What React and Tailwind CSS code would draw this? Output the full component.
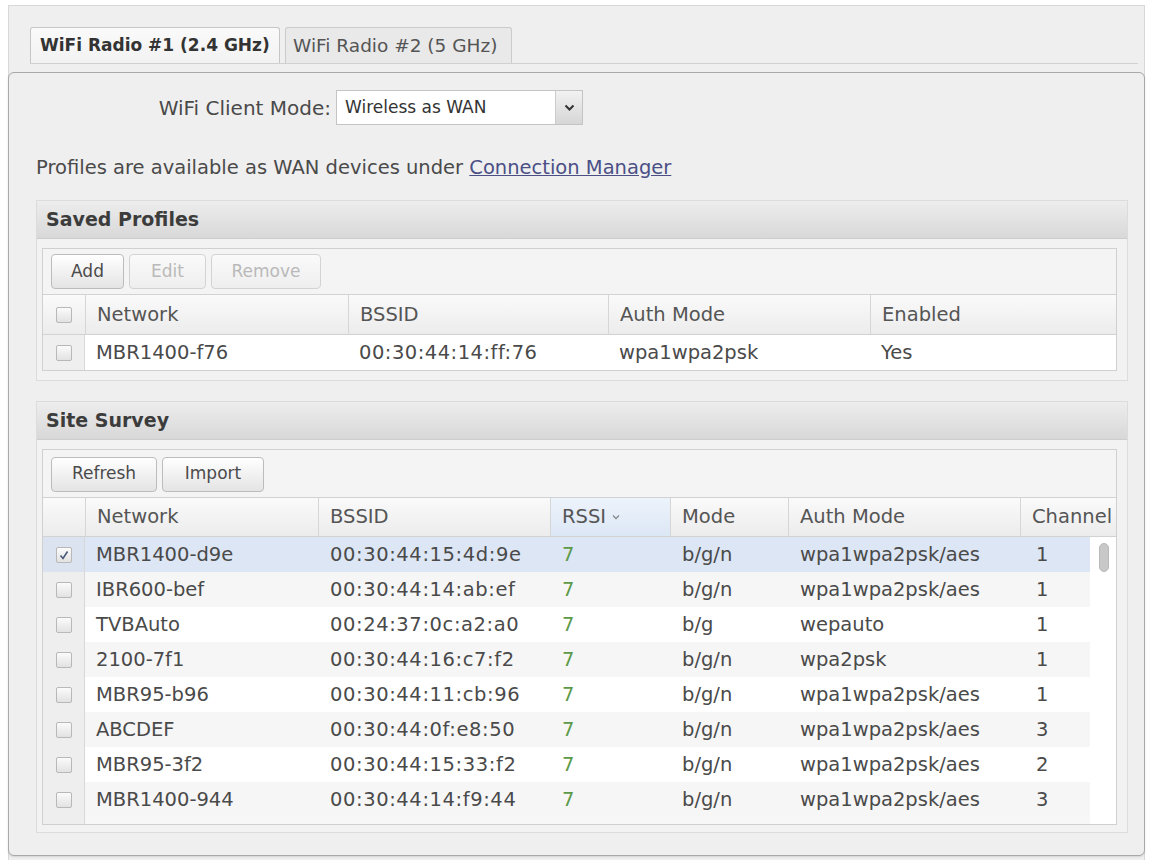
import React from "react";

const profiles = [["MBR1400-f76", "00:30:44:14:ff:76", "wpa1wpa2psk", "Yes"]];

const survey = [
  ["MBR1400-d9e", "00:30:44:15:4d:9e", "7", "b/g/n", "wpa1wpa2psk/aes", "1", true],
  ["IBR600-bef", "00:30:44:14:ab:ef", "7", "b/g/n", "wpa1wpa2psk/aes", "1"],
  ["TVBAuto", "00:24:37:0c:a2:a0", "7", "b/g", "wepauto", "1"],
  ["2100-7f1", "00:30:44:16:c7:f2", "7", "b/g/n", "wpa2psk", "1"],
  ["MBR95-b96", "00:30:44:11:cb:96", "7", "b/g/n", "wpa1wpa2psk/aes", "1"],
  ["ABCDEF", "00:30:44:0f:e8:50", "7", "b/g/n", "wpa1wpa2psk/aes", "3"],
  ["MBR95-3f2", "00:30:44:15:33:f2", "7", "b/g/n", "wpa1wpa2psk/aes", "2"],
  ["MBR1400-944", "00:30:44:14:f9:44", "7", "b/g/n", "wpa1wpa2psk/aes", "3"],
];

function Checkbox({ checked }) {
  return (
    <span className="w-[16px] h-[16px] border border-[#b8b8b8] rounded-[2px] bg-linear-to-b from-[#fbfbfb] to-[#e2e2e2] flex items-center justify-center">
      {checked && (
        <svg width="12" height="12" viewBox="0 0 12 12">
          <path d="M2.5 6.5 L5 9.5 L9.5 2.5" fill="none" stroke="#4a5a78" strokeWidth="1.6" />
        </svg>
      )}
    </span>
  );
}

function Button({ children, width, disabled }) {
  return (
    <div
      className={
        "h-[35px] rounded-[4px] border flex items-center justify-center text-[17px] bg-linear-to-b " +
        width +
        (disabled
          ? " border-[#d3d3d3] from-[#fafafa] to-[#eeeeee] text-[#b9b9b9]"
          : " border-[#bcbcbc] from-white to-[#e4e4e4] text-[#4a4a4a]")
      }
    >
      {children}
    </div>
  );
}

function SectionHeader({ title }) {
  return (
    <div className="h-[38px] bg-linear-to-b from-[#ededed] to-[#d8d8d8] border-b border-[#cdcdcd] flex items-center pl-[9px] font-bold text-[19px] text-[#3c3c3c]">
      {title}
    </div>
  );
}

function HeadCell({ children, className = "" }) {
  return (
    <div className={"flex items-center pl-[11px] border-l border-[#d6d6d6] whitespace-nowrap overflow-hidden " + className}>
      {children}
    </div>
  );
}

export default function App() {
  return (
    <div className="w-[1154px] h-[860px] bg-white pt-[5px] pl-[8px] pr-[9px] font-['DejaVu_Sans',sans-serif] text-[#4a4a4a]">
      <div className="h-[855px] bg-[#efefef] border-t border-r border-l border-[#d8d8d8] flex flex-col">
        {/* radio tabs */}
        <div className="pt-[22px] pl-[21px] pr-[6px]">
          <div className="flex items-end gap-[5px] h-[36px] border-b border-[#d0d0d0]">
            <div className="h-[36px] w-[250px] px-[9px] border border-b-0 border-[#c6c6c6] rounded-t-[3px] bg-linear-to-b from-[#fafafa] to-[#f2f2f2] flex items-center font-bold text-[17px] text-[#333] whitespace-nowrap">
              WiFi Radio #1 (2.4 GHz)
            </div>
            <div className="h-[36px] w-[227px] px-[7px] border border-b-0 border-[#cbcbcb] rounded-t-[3px] bg-[#e9e9e9] flex items-center text-[18.5px] text-[#555] whitespace-nowrap">
              WiFi Radio #2 (5 GHz)
            </div>
          </div>
        </div>

        {/* main panel */}
        <div className="mt-[8px] mb-[4px] -ml-px -mr-px flex-1 border border-[#a9a9a9] rounded-[6px] bg-[#efefef] flex flex-col pl-[27px] shadow-[0_1px_2px_rgba(0,0,0,0.12)]">
          <div className="mt-[17px] flex items-center h-[35px]">
            <div className="w-[300px] text-right pr-[5px] text-[20px] whitespace-nowrap">WiFi Client Mode:</div>
            <div className="w-[247px] h-[35px] border border-[#c4c4c4] bg-white flex">
              <div className="flex-1 flex items-center pl-[8px] text-[17px] text-[#333]">Wireless as WAN</div>
              <div className="w-[27px] border-l border-[#cccccc] bg-linear-to-b from-[#f2f2f2] to-[#d6d6d6] flex items-center justify-center">
                <svg width="11" height="8" viewBox="0 0 11 8">
                  <path d="M1.5 1.5 L5.5 5.5 L9.5 1.5" fill="none" stroke="#333" strokeWidth="2" />
                </svg>
              </div>
            </div>
          </div>

          <div className="mt-[31px] h-[24px] flex items-center text-[19.5px] whitespace-nowrap">
            Profiles are available as WAN devices under&nbsp;
            <span className="underline text-[#4b4f86] decoration-[#4b4f86]">Connection Manager</span>
          </div>

          {/* saved profiles */}
          <div className="mt-[20px] w-[1092px] border border-[#dcdcdc] bg-[#f2f2f2] pb-[9px]">
            <SectionHeader title="Saved Profiles" />
            <div className="mt-[9px] ml-[5px] w-[1075px] border border-[#d0d0d0] bg-[#f4f4f4]">
              <div className="h-[45px] flex items-center gap-[5px] pl-[8px]">
                <Button width="w-[73px]">Add</Button>
                <Button width="w-[77px]" disabled>Edit</Button>
                <Button width="w-[110px]" disabled>Remove</Button>
              </div>
              <div className="grid grid-cols-[42px_263px_260px_262px_1fr] h-[41px] border-t border-b border-[#d2d2d2] bg-linear-to-b from-[#fafafa] to-[#ececec] text-[19.5px] text-[#555]">
                <div className="flex items-center justify-center"><Checkbox /></div>
                <HeadCell>Network</HeadCell>
                <HeadCell>BSSID</HeadCell>
                <HeadCell>Auth Mode</HeadCell>
                <HeadCell>Enabled</HeadCell>
              </div>
              {profiles.map((p) => (
                <div key={p[0]} className="grid grid-cols-[42px_263px_260px_262px_1fr] h-[35px] text-[19.5px]">
                  <div className="flex items-center justify-center bg-[#efefef] border-r border-[#d8d8d8]"><Checkbox /></div>
                  <div className="flex items-center pl-[11px] bg-white">{p[0]}</div>
                  <div className="flex items-center pl-[11px] bg-white tracking-[0.5px]">{p[1]}</div>
                  <div className="flex items-center pl-[11px] bg-white">{p[2]}</div>
                  <div className="flex items-center pl-[11px] bg-white">{p[3]}</div>
                </div>
              ))}
            </div>
          </div>

          {/* site survey */}
          <div className="mt-[20px] w-[1092px] border border-[#dcdcdc] bg-[#f2f2f2] pb-[7px]">
            <SectionHeader title="Site Survey" />
            <div className="mt-[9px] ml-[5px] w-[1075px] border border-[#d0d0d0] bg-[#f4f4f4] overflow-hidden">
              <div className="h-[47px] flex items-center gap-[5px] pl-[8px] pt-[1px]">
                <Button width="w-[106px]">Refresh</Button>
                <Button width="w-[102px]">Import</Button>
              </div>
              <div className="grid grid-cols-[42px_233px_232px_120px_118px_232px_1fr] h-[40px] border-t border-b border-[#d2d2d2] bg-linear-to-b from-[#fafafa] to-[#ececec] text-[19.5px] text-[#555]">
                <div />
                <HeadCell>Network</HeadCell>
                <HeadCell>BSSID</HeadCell>
                <HeadCell className="bg-linear-to-b from-[#edf3fb] to-[#dce7f5]">
                  RSSI
                  <svg className="ml-[6px]" width="8" height="6" viewBox="0 0 8 6">
                    <path d="M1 1.5 L4 4.5 L7 1.5" fill="none" stroke="#8a8a8a" strokeWidth="1.3" />
                  </svg>
                </HeadCell>
                <HeadCell>Mode</HeadCell>
                <HeadCell>Auth Mode</HeadCell>
                <HeadCell>Channel</HeadCell>
              </div>
              <div className="flex h-[287px]">
                <div className="w-[1047px] flex flex-col bg-[#f7f7f7]">
                  {survey.map((r, idx) => {
                    const rowBg = r[6] ? "bg-[#dde6f4]" : idx % 2 === 1 ? "bg-[#f6f6f6]" : "bg-white";
                    return (
                      <div key={r[0]} className={"grid grid-cols-[42px_233px_232px_120px_118px_232px_1fr] h-[35px] text-[19.5px] " + rowBg}>
                        <div className={"flex items-center justify-center border-r border-[#d8d8d8] " + (r[6] ? "bg-[#dbe3f0]" : "bg-[#eeeeee]")}>
                          <Checkbox checked={r[6]} />
                        </div>
                        <div className="flex items-center pl-[11px]">{r[0]}</div>
                        <div className="flex items-center pl-[12px] tracking-[0.6px]">{r[1]}</div>
                        <div className="flex items-center pl-[12px] text-[#5c9a48]">{r[2]}</div>
                        <div className="flex items-center pl-[12px]">{r[3]}</div>
                        <div className="flex items-center pl-[12px]">{r[4]}</div>
                        <div className="flex items-center pl-[16px]">{r[5]}</div>
                      </div>
                    );
                  })}
                  <div className="flex-1 flex">
                    <div className="w-[42px] bg-[#eeeeee] border-r border-[#d8d8d8]" />
                    <div className="flex-1 bg-[#f7f7f7]" />
                  </div>
                </div>
                <div className="flex-1 bg-white pt-[6px] pl-[9px]">
                  <div className="w-[10px] h-[29px] rounded-full bg-[#c8c8c8] border border-[#b9b9b9]" />
                </div>
              </div>
            </div>
          </div>
        </div>
      </div>
    </div>
  );
}
